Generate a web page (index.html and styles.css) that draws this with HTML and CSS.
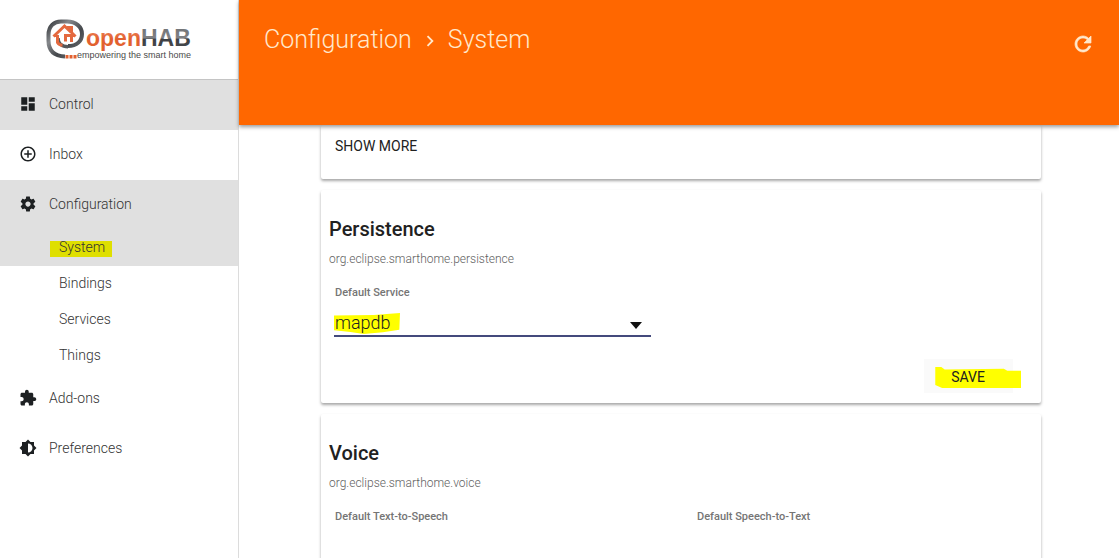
FILE: index.html
```html
<!DOCTYPE html>
<html lang="en">
<head>
<meta charset="utf-8">
<title>openHAB - System</title>
<link rel="stylesheet" href="styles.css">
</head>
<body>
<aside class="sidebar">
  <a class="brand" href="#">
    <svg class="logo" viewBox="0 0 148 44" role="img" aria-label="openHAB">
      <defs>
        <linearGradient id="ring" x1="0" y1="0" x2="1" y2="1">
          <stop offset="0" stop-color="#34373b"/><stop offset=".3" stop-color="#85888b"/><stop offset=".6" stop-color="#45484c"/><stop offset="1" stop-color="#707376"/>
        </linearGradient>
        <linearGradient id="warm" x1="0" y1="0" x2="0" y2="1">
          <stop offset="0" stop-color="#f0926c"/><stop offset=".55" stop-color="#e2602f"/><stop offset="1" stop-color="#e2602f"/>
        </linearGradient>
        <linearGradient id="steel" x1="0" y1="0" x2="0" y2="1">
          <stop offset="0" stop-color="#6d7073"/><stop offset=".5" stop-color="#808285"/><stop offset=".55" stop-color="#3c3f43"/><stop offset="1" stop-color="#4b4e51"/>
        </linearGradient>
      </defs>
      <path d="M20 38.500C9 38 3.500 33 3.500 22.500V17C3.500 8 9 3.500 16 3.500h6c9 0 15 5.500 15 12.500S32 28 23 28" fill="none" stroke="url(#ring)" stroke-width="4"/>
      <path d="M13 20c0 5.500 4 8.800 10 8.800" fill="none" stroke="#55585b" stroke-width="3.500"/>
      <path d="M8.500 18.500 19.500 8l4 3.800V9.500h3v5l4 4M12.500 17v7.500q1.500 2.500 5 2.800M26.500 24V17.500h-6v6" fill="none" stroke="#e4693f" stroke-width="3"/>
      <path d="M20.500 37h3v3.500h-3zM24.500 37h3v3.500h-3zM28.500 37h3v3.500h-3z" fill="#e2602f"/>
      <text class="logo-name" x="41" y="28"><tspan fill="url(#warm)">open</tspan><tspan fill="url(#steel)">HAB</tspan></text>
      <text class="logo-tag" x="32" y="40">empowering the smart home</text>
    </svg>
  </a>
  <nav class="menu">
    <a class="item active" href="#"><svg viewBox="0 0 24 24"><path d="M3 13h8V3H3v10zm0 8h8v-6H3v6zm10 0h8V11h-8v10zm0-18v6h8V3h-8z"/></svg>Control</a>
    <a class="item" href="#"><svg viewBox="0 0 24 24"><path d="M13 7h-2v4H7v2h4v4h2v-4h4v-2h-4V7zm-1-5C6.480 2 2 6.480 2 12s4.480 10 10 10 10-4.480 10-10S17.520 2 12 2zm0 18c-4.410 0-8-3.590-8-8s3.590-8 8-8 8 3.590 8 8-3.590 8-8 8z"/></svg>Inbox</a>
    <a class="item active" href="#"><svg viewBox="0 0 24 24"><path d="M19.430 12.980c.04-.32.07-.64.07-.98s-.03-.66-.07-.98l2.110-1.650c.19-.15.24-.42.12-.64l-2-3.460c-.12-.22-.39-.3-.61-.22l-2.490 1c-.52-.4-1.080-.73-1.690-.98l-.38-2.650C14.460 2.180 14.250 2 14 2h-4c-.25 0-.46.18-.49.42l-.38 2.650c-.61.25-1.170.59-1.690.98l-2.490-1c-.23-.09-.49 0-.61.22l-2 3.460c-.13.22-.07.49.12.64l2.110 1.650c-.04.32-.07.65-.07.98s.03.66.07.98l-2.110 1.650c-.19.15-.24.42-.12.64l2 3.460c.12.22.39.3.61.22l2.490-1c.52.4 1.080.73 1.690.98l.38 2.650c.03.24.24.42.49.42h4c.25 0 .46-.18.49-.42l.38-2.650c.61-.25 1.170-.59 1.690-.98l2.490 1c.23.09.49 0 .61-.22l2-3.460c.12-.22.07-.49-.12-.64l-2.110-1.650zM12 15.500c-1.930 0-3.500-1.570-3.500-3.500s1.570-3.500 3.500-3.500 3.500 1.570 3.500 3.500-1.570 3.500-3.500 3.500z"/></svg>Configuration</a>
    <a class="subitem active" href="#"><span class="marked">System</span></a>
    <a class="subitem" href="#">Bindings</a>
    <a class="subitem" href="#">Services</a>
    <a class="subitem" href="#">Things</a>
    <a class="item" href="#"><svg viewBox="0 0 24 24"><path d="M20.500 11H19V7c0-1.100-.9-2-2-2h-4V3.500C13 2.120 11.880 1 10.500 1S8 2.120 8 3.500V5H4c-1.100 0-1.990.9-1.990 2v3.800H3.500c1.490 0 2.700 1.210 2.700 2.700s-1.210 2.700-2.700 2.700H2V20c0 1.100.9 2 2 2h3.800v-1.500c0-1.490 1.210-2.700 2.700-2.700 1.490 0 2.700 1.210 2.700 2.700V22H17c1.100 0 2-.9 2-2v-4h1.500c1.380 0 2.500-1.120 2.500-2.500S21.880 11 20.500 11z"/></svg>Add-ons</a>
    <a class="item" href="#"><svg viewBox="0 0 24 24"><path d="M20 15.310L23.310 12 20 8.690V4h-4.690L12 .69 8.690 4H4v4.690L.69 12 4 15.310V20h4.690L12 23.310 15.310 20H20v-4.690zM12 18V6c3.310 0 6 2.690 6 6s-2.690 6-6 6z"/></svg>Preferences</a>
  </nav>
</aside>
<div class="page">
  <header class="topbar">
    <h1 class="crumbs"><a href="#">Configuration</a><svg viewBox="0 0 24 24"><path d="M10 6 8.590 7.410 13.170 12l-4.580 4.590L10 18l6-6z"/></svg><span>System</span></h1>
    <button class="refresh" type="button" aria-label="Refresh"><svg viewBox="0 0 24 24"><path d="M17.650 6.350C16.200 4.900 14.210 4 12 4c-4.420 0-7.990 3.580-7.990 8s3.570 8 7.990 8c3.730 0 6.840-2.550 7.730-6h-2.080c-.82 2.330-3.040 4-5.650 4-3.310 0-6-2.690-6-6s2.690-6 6-6c1.660 0 3.140.69 4.220 1.780L13 11h7V4l-2.350 2.350z"/></svg></button>
  </header>
  <main class="content">
    <section class="card card-more">
      <button class="action" type="button">SHOW MORE</button>
    </section>
    <section class="card">
      <h2>Persistence</h2>
      <p>org.eclipse.smarthome.persistence</p>
      <div class="fields">
        <div class="field">
          <label for="service">Default Service</label>
          <div class="picker">
            <select id="service"><option>mapdb</option></select>
            <svg class="arrow" viewBox="0 0 12 7"><path d="M0 0h12L6 7z"/></svg>
          </div>
        </div>
      </div>
      <div class="actions"><button class="action save" type="button">SAVE</button></div>
    </section>
    <section class="card">
      <h2>Voice</h2>
      <p>org.eclipse.smarthome.voice</p>
      <div class="fields">
        <div class="field"><label for="tts">Default Text-to-Speech</label><div class="picker"><select id="tts"><option></option></select></div></div>
        <div class="field"><label for="stt">Default Speech-to-Text</label><div class="picker"><select id="stt"><option></option></select></div></div>
      </div>
    </section>
  </main>
</div>
</body>
</html>
```
FILE: styles.css
```css
* { box-sizing: border-box; }
body {
  margin: 0;
  height: 100vh;
  display: flex;
  overflow: hidden;
  background: #fff;
  color: #212121;
  font: 300 14px/20px Roboto, sans-serif;
}
a { color: inherit; text-decoration: none; }
button { border: 0; padding: 0; background: none; font: inherit; color: inherit; }

.sidebar {
  flex: 0 0 239px;
  border-right: 1px solid #dcdcdc;
}
.brand {
  display: flex;
  justify-content: center;
  height: 80px;
  padding-top: 18px;
  border-bottom: 1px solid #c4c4c4;
}
.logo { width: 148px; height: 44px; }
.logo-name { font: 700 23px "Liberation Sans", sans-serif; }
.logo-tag { font: 400 9px "Liberation Sans", sans-serif; fill: #4a4a4a; }
.menu { color: #333; }
.item {
  display: flex;
  align-items: center;
  gap: 12px;
  height: 50px;
  padding: 0 19px 2px;
}
.item svg { width: 18px; height: 18px; fill: #1d2022; }
.subitem {
  display: flex;
  align-items: center;
  height: 36px;
  padding: 0 59px 2px;
}
.active { background: #e0e0e0; }
.marked { position: relative; isolation: isolate; }
.marked::before {
  content: "";
  position: absolute;
  z-index: -1;
  inset: 4px -7px 0 -9px;
  background: #dfdf00;
}

.page { flex: 1; min-width: 0; display: flex; flex-direction: column; }
.topbar {
  flex: none;
  z-index: 1;
  display: flex;
  justify-content: space-between;
  align-items: flex-start;
  height: 125px;
  padding: 24px 24px 0 25px;
  background: #ff6700;
  color: #ffe8cc;
  box-shadow: 0 2px 4px rgba(0, 0, 0, .4);
}
.crumbs {
  display: flex;
  align-items: center;
  gap: 7px;
  margin: 0;
  font-size: 25px;
  line-height: 32px;
  font-weight: 300;
}
.crumbs svg {
  width: 22px;
  height: 22px;
  margin-top: 2px;
  fill: currentColor;
}
.refresh { margin-top: 8px; }
.refresh svg {
  display: block;
  width: 24px;
  height: 24px;
  fill: currentColor;
  stroke: currentColor;
  stroke-width: .7;
}

.content {
  flex: 1;
  min-height: 0;
  overflow: hidden;
  display: flex;
  flex-direction: column;
  gap: 11px;
  padding: 0 78px 0 82px;
}
.card {
  flex: none;
  padding: 24px 3px 10px 8px;
  border-radius: 2px;
  box-shadow: 0 2px 3px rgba(0, 0, 0, .35);
}
.card-more { padding: 11px 14px 23px; }
.card h2 { margin: 0; font-size: 20px; line-height: 30px; font-weight: 500; }
.card p { margin: 5px 0 15px; font-size: 12px; line-height: 20px; color: #616161; }
.fields {
  display: grid;
  grid-template-columns: 1fr 1fr;
  column-gap: 20px;
  padding-left: 5px;
}
.field { padding-right: 25px; }
.field label {
  display: block;
  padding-left: 1px;
  font-size: 11px;
  line-height: 18px;
  font-weight: 500;
  color: #757575;
}
.picker {
  position: relative;
  isolation: isolate;
  margin-top: 9px;
  border-bottom: 2px solid #444a7c;
}
.picker select {
  appearance: none;
  display: block;
  width: 100%;
  height: 24px;
  padding: 0 1px;
  border: 0;
  background: none;
  font: 300 18px/24px Roboto, sans-serif;
  color: #212121;
}
.picker:has(.arrow)::before {
  content: "";
  position: absolute;
  z-index: -1;
  top: 2px;
  left: 0;
  width: 66px;
  height: 21px;
  background: #ff0;
  clip-path: polygon(0 12%, 60% 10%, 100% 0, 99% 80%, 74% 92%, 45% 100%, 25% 90%, 0 82%);
}
.arrow { position: absolute; right: 9px; top: 11px; width: 12px; height: 7px; fill: #111; }
.actions { display: flex; justify-content: flex-end; margin-top: 22px; }
.action { font-weight: 400; line-height: 20px; padding: 0; display: block; }
.save {
  position: relative;
  isolation: isolate;
  height: 34px;
  padding: 2px 28px 0 27px;
  margin-right: 25px;
  background: #fafafa;
}
.save::before {
  content: "";
  position: absolute;
  z-index: -1;
  inset: 8px -8px 5px 11px;
  background: #ff0;
  clip-path: polygon(0 0, 7% 0, 11% 12%, 80% 8%, 84% 18%, 100% 18%, 100% 100%, 8% 100%, 0 86%);
}
```
